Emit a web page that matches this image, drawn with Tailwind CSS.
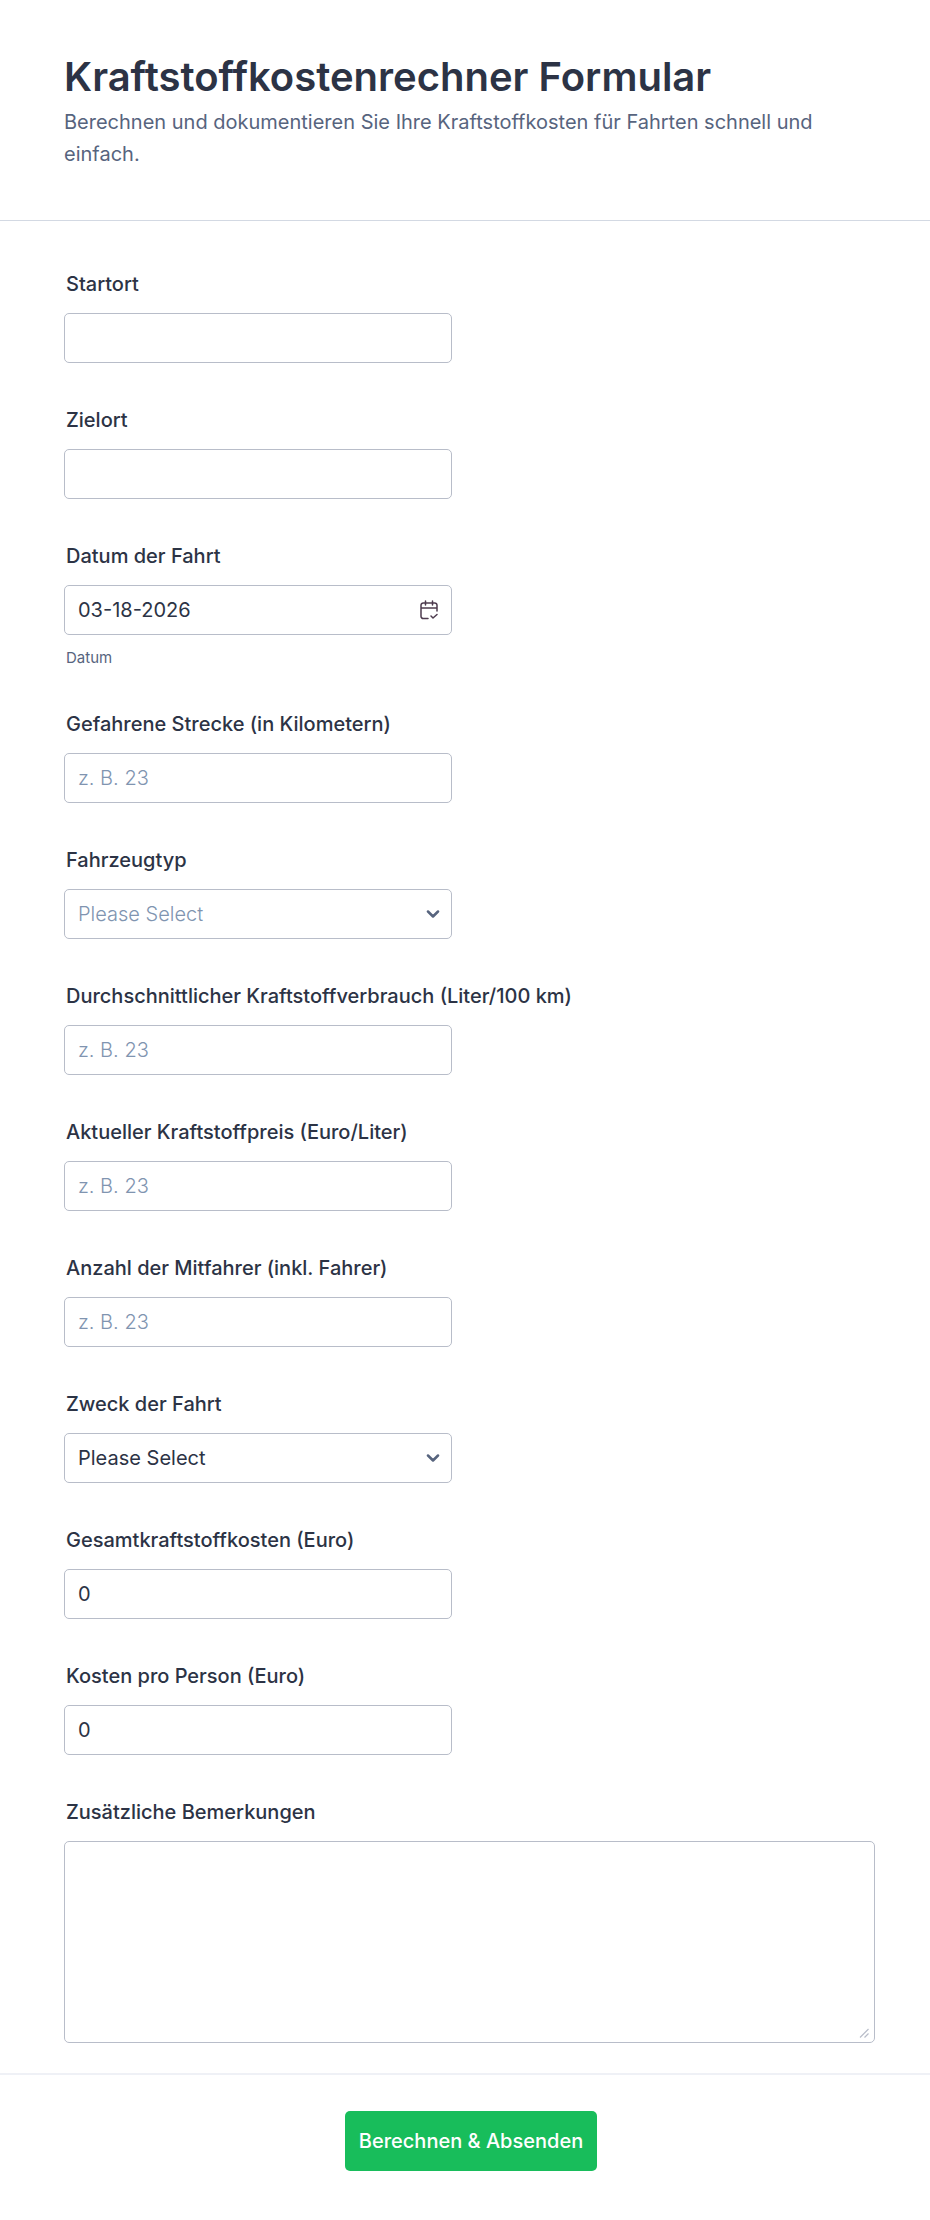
<!DOCTYPE html>
<html lang="de">
<head>
<meta charset="utf-8">
<meta name="viewport" content="width=device-width, initial-scale=1">
<title>Kraftstoffkostenrechner Formular</title>
<script src="https://cdn.jsdelivr.net/npm/@tailwindcss/browser@4"></script>
</head>
<body class="bg-white font-['Inter',sans-serif] text-xl text-[#2c3345]">
<form>
  <header class="border-b border-[#d3d9e3] px-16 pt-13 pb-[50px]">
    <h1 class="text-[40px] leading-[50px] font-semibold">Kraftstoffkostenrechner Formular</h1>
    <p class="mt-1 text-xl leading-8 text-[#57647e]">Berechnen und dokumentieren Sie Ihre Kraftstoffkosten für Fahrten schnell und einfach.</p>
  </header>

  <div class="flex flex-col gap-[43px] pt-[49px] pr-[55px] pb-[30px] pl-16">
    <div class="flex flex-col gap-[15px]">
      <label for="start" class="px-0.5 leading-7 font-medium">Startort</label>
      <input id="start" type="text" class="h-[50px] w-full max-w-[388px] rounded-[5px] border border-[#b8bdc9] px-[13px]">
    </div>
    <div class="flex flex-col gap-[15px]">
      <label for="ziel" class="px-0.5 leading-7 font-medium">Zielort</label>
      <input id="ziel" type="text" class="h-[50px] w-full max-w-[388px] rounded-[5px] border border-[#b8bdc9] px-[13px]">
    </div>
    <div class="flex flex-col gap-[15px]">
      <label for="datum" class="px-0.5 leading-7 font-medium">Datum der Fahrt</label>
      <div class="relative w-full max-w-[388px]">
        <input id="datum" type="text" value="03-18-2026" aria-describedby="datum-hint" class="block h-[50px] w-full rounded-[5px] border border-[#b8bdc9] px-[13px]">
        <button type="button" aria-label="Datum wählen" class="absolute inset-y-0 right-[13px] flex items-center">
          <svg class="size-5" viewBox="0 0 20 20" fill="none" stroke="#4d3b4e" stroke-width="1.5" stroke-linecap="round" stroke-linejoin="round"><path d="M9 18.500H4.200A2.200 2.200 0 0 1 2 16.300V5.200A2.200 2.200 0 0 1 4.200 3H15.800A2.200 2.200 0 0 1 18 5.200V11M2 8H18M6.500 1V5M13.500 1V5M12 16L14 18L18 14.500"/></svg>
        </button>
      </div>
      <span id="datum-hint" class="-mt-0.5 -mb-px px-0.5 text-[15px] leading-5 text-[#57647e]">Datum</span>
    </div>
    <div class="flex flex-col gap-[15px]">
      <label for="strecke" class="px-0.5 leading-7 font-medium">Gefahrene Strecke (in Kilometern)</label>
      <input id="strecke" type="text" inputmode="decimal" placeholder="z. B. 23" class="h-[50px] w-full max-w-[388px] rounded-[5px] border border-[#b8bdc9] px-[13px] placeholder:font-light placeholder:text-[#8094b0]">
    </div>
    <div class="flex flex-col gap-[15px]">
      <label for="typ" class="px-0.5 leading-7 font-medium">Fahrzeugtyp</label>
      <div class="relative w-full max-w-[388px]">
        <select id="typ" class="block h-[50px] w-full appearance-none rounded-[5px] border border-[#b8bdc9] px-[13px] font-light text-[#8094b0]"><option>Please Select</option></select>
        <svg class="pointer-events-none absolute inset-y-0 right-3 my-auto h-2 w-3.5" viewBox="0 0 14 8" fill="none" stroke="#57647e" stroke-width="2.500" stroke-linecap="round" stroke-linejoin="round"><path d="M2 1.500L7 6.500L12 1.500"/></svg>
      </div>
    </div>
    <div class="flex flex-col gap-[15px]">
      <label for="verbrauch" class="px-0.5 leading-7 font-medium">Durchschnittlicher Kraftstoffverbrauch (Liter/100 km)</label>
      <input id="verbrauch" type="text" inputmode="decimal" placeholder="z. B. 23" class="h-[50px] w-full max-w-[388px] rounded-[5px] border border-[#b8bdc9] px-[13px] placeholder:font-light placeholder:text-[#8094b0]">
    </div>
    <div class="flex flex-col gap-[15px]">
      <label for="preis" class="px-0.5 leading-7 font-medium">Aktueller Kraftstoffpreis (Euro/Liter)</label>
      <input id="preis" type="text" inputmode="decimal" placeholder="z. B. 23" class="h-[50px] w-full max-w-[388px] rounded-[5px] border border-[#b8bdc9] px-[13px] placeholder:font-light placeholder:text-[#8094b0]">
    </div>
    <div class="flex flex-col gap-[15px]">
      <label for="mitfahrer" class="px-0.5 leading-7 font-medium">Anzahl der Mitfahrer (inkl. Fahrer)</label>
      <input id="mitfahrer" type="text" inputmode="numeric" placeholder="z. B. 23" class="h-[50px] w-full max-w-[388px] rounded-[5px] border border-[#b8bdc9] px-[13px] placeholder:font-light placeholder:text-[#8094b0]">
    </div>
    <div class="flex flex-col gap-[15px]">
      <label for="zweck" class="px-0.5 leading-7 font-medium">Zweck der Fahrt</label>
      <div class="relative w-full max-w-[388px]">
        <select id="zweck" class="block h-[50px] w-full appearance-none rounded-[5px] border border-[#b8bdc9] px-[13px]"><option>Please Select</option></select>
        <svg class="pointer-events-none absolute inset-y-0 right-3 my-auto h-2 w-3.5" viewBox="0 0 14 8" fill="none" stroke="#57647e" stroke-width="2.500" stroke-linecap="round" stroke-linejoin="round"><path d="M2 1.500L7 6.500L12 1.500"/></svg>
      </div>
    </div>
    <div class="flex flex-col gap-[15px]">
      <label for="gesamt" class="px-0.5 leading-7 font-medium">Gesamtkraftstoffkosten (Euro)</label>
      <input id="gesamt" type="text" value="0" class="h-[50px] w-full max-w-[388px] rounded-[5px] border border-[#b8bdc9] px-[13px]">
    </div>
    <div class="flex flex-col gap-[15px]">
      <label for="person" class="px-0.5 leading-7 font-medium">Kosten pro Person (Euro)</label>
      <input id="person" type="text" value="0" class="h-[50px] w-full max-w-[388px] rounded-[5px] border border-[#b8bdc9] px-[13px]">
    </div>
    <div class="flex flex-col gap-[15px]">
      <label for="bemerkungen" class="px-0.5 leading-7 font-medium">Zusätzliche Bemerkungen</label>
      <div class="relative">
        <textarea id="bemerkungen" class="block h-[202px] w-full resize-none rounded-[5px] border border-[#b8bdc9] p-3"></textarea>
        <svg class="pointer-events-none absolute right-1.5 bottom-[5px] size-2.5" viewBox="0 0 10 10" fill="none" stroke="#b8bdc9" stroke-width="1.2"><path d="M1 9.500L9.500 1M5.500 9.500L9.500 5.500"/></svg>
      </div>
    </div>
  </div>

  <footer class="flex justify-center border-t-2 border-[#eff1f6] pt-9 pb-12 pl-3">
    <button type="submit" class="h-[60px] rounded-[5px] bg-[#18bd5b] px-3.5 font-medium text-white">Berechnen &amp; Absenden</button>
  </footer>
</form>
</body>
</html>
